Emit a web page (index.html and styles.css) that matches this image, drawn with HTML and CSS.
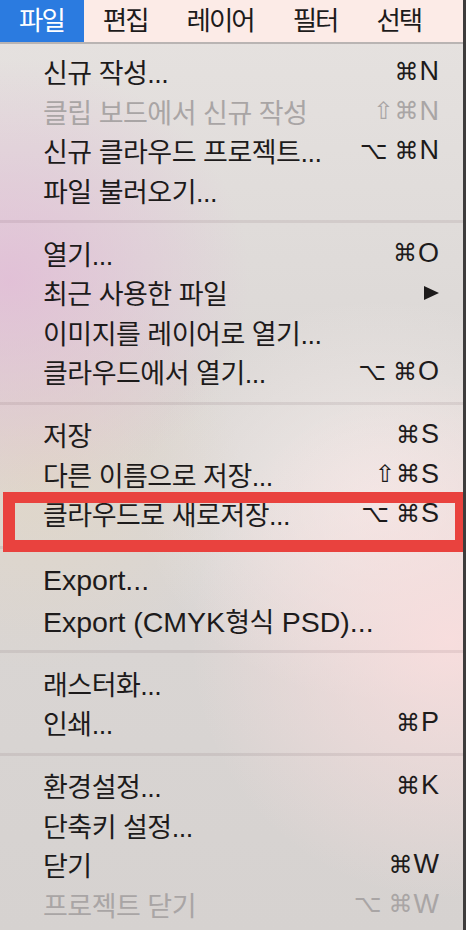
FILE: index.html
```html
<!DOCTYPE html>
<html lang="ko">
<head>
<meta charset="utf-8">
<title>파일 메뉴</title>
<link rel="stylesheet" href="styles.css">
</head>
<body>
<div class="screen">
  <nav class="menubar">
    <span class="bar-item active">파일</span>
    <span class="bar-item">편집</span>
    <span class="bar-item">레이어</span>
    <span class="bar-item">필터</span>
    <span class="bar-item">선택</span>
  </nav>
  <div class="menu">
    <div class="row"><span class="label">신규 작성...</span><span class="keys"><span class="sym">⌘</span>N</span></div>
    <div class="row disabled"><span class="label">클립 보드에서 신규 작성</span><span class="keys"><span class="sym">⇧</span><span class="sym">⌘</span>N</span></div>
    <div class="row"><span class="label">신규 클라우드 프로젝트...</span><span class="keys"><span class="sym opt">⌥</span><span class="sym">⌘</span>N</span></div>
    <div class="row"><span class="label">파일 불러오기...</span></div>
    <div class="sep"></div>
    <div class="row"><span class="label">열기...</span><span class="keys"><span class="sym">⌘</span>O</span></div>
    <div class="row"><span class="label">최근 사용한 파일</span><span class="arrow"></span></div>
    <div class="row"><span class="label">이미지를 레이어로 열기...</span></div>
    <div class="row"><span class="label">클라우드에서 열기...</span><span class="keys"><span class="sym opt">⌥</span><span class="sym">⌘</span>O</span></div>
    <div class="sep"></div>
    <div class="row"><span class="label">저장</span><span class="keys"><span class="sym">⌘</span>S</span></div>
    <div class="row"><span class="label">다른 이름으로 저장...</span><span class="keys"><span class="sym">⇧</span><span class="sym">⌘</span>S</span></div>
    <div class="row marked"><span class="label">클라우드로 새로저장...</span><span class="keys"><span class="sym opt">⌥</span><span class="sym">⌘</span>S</span><span class="highlight-box"></span></div>
    <div class="sep sep-tall"></div>
    <div class="row latin"><span class="label">Export...</span></div>
    <div class="row latin"><span class="label">Export (CMYK<span class="ko">형식</span> PSD)...</span></div>
    <div class="sep"></div>
    <div class="row"><span class="label">래스터화...</span></div>
    <div class="row"><span class="label">인쇄...</span><span class="keys"><span class="sym">⌘</span>P</span></div>
    <div class="sep"></div>
    <div class="row"><span class="label">환경설정...</span><span class="keys"><span class="sym">⌘</span>K</span></div>
    <div class="row"><span class="label">단축키 설정...</span></div>
    <div class="row"><span class="label">닫기</span><span class="keys"><span class="sym">⌘</span>W</span></div>
    <div class="row disabled"><span class="label">프로젝트 닫기</span><span class="keys"><span class="sym opt">⌥</span><span class="sym">⌘</span>W</span></div>
  </div>
</div>
</body>
</html>
```

FILE: styles.css
```css
* { box-sizing: border-box; }
html, body { margin: 0; padding: 0; }
body {
  width: 466px;
  height: 930px;
  overflow: hidden;
  font-family: "Liberation Sans", "Noto Sans CJK KR", sans-serif;
  color: #1d1b1b;
}
.screen {
  width: 466px;
  height: 930px;
  border-right: 3px solid #3e3c3c;
  display: flex;
  flex-direction: column;
  background:
    radial-gradient(ellipse 240px 220px at 10px 280px, rgba(226, 186, 214, 0.8), rgba(226, 186, 214, 0) 100%),
    radial-gradient(ellipse 200px 200px at 40px 470px, rgba(226, 214, 196, 0.7), rgba(226, 214, 196, 0) 100%),
    radial-gradient(ellipse 260px 260px at 450px 640px, rgba(250, 222, 222, 0.9), rgba(250, 222, 222, 0) 100%),
    radial-gradient(ellipse 240px 200px at 380px 500px, rgba(246, 238, 236, 0.8), rgba(246, 238, 236, 0) 100%),
    linear-gradient(to bottom, #e6e2e0 0%, #dcd8d6 40%, #d9d5d3 70%, #d6d2d0 100%);
}
.menubar {
  height: 44px;
  flex: none;
  display: flex;
  background: #fcebe7;
  border-bottom: 2px solid #b9b4b3;
  font-size: 26.5px;
  line-height: 42px;
  letter-spacing: -2px;
}
.bar-item {
  flex: none;
  white-space: nowrap;
  padding: 0 20px 0 19px;
  color: #1d1b1b;
}
.bar-item.active {
  background: #2b7be0;
  color: #ffffff;
}
.menu {
  padding: 8px 0 0 0;
  display: flex;
  flex-direction: column;
}
.row {
  height: 39.5px;
  display: flex;
  align-items: center;
  justify-content: space-between;
  padding: 0 24px 0 43px;
  font-size: 27px;
  white-space: nowrap;
}
.row .label { letter-spacing: -0.5px; }
.row.latin { font-size: 28.5px; }
.row.latin .label { letter-spacing: 0; }
.row.latin .ko { font-size: 27px; letter-spacing: -0.5px; }
.row.disabled { color: #a9a5a5; }
.keys {
  display: flex;
  align-items: center;
  font-family: "Liberation Sans", sans-serif;
  font-size: 27px;
}
.sym {
  font-family: "DejaVu Sans", sans-serif;
  font-size: 24px;
  margin-right: 1px;
}
.sym.opt { margin-right: 7px; }
.arrow {
  width: 0;
  height: 0;
  border-top: 7px solid transparent;
  border-bottom: 7px solid transparent;
  border-left: 15px solid #1d1b1b;
}
.sep {
  height: 23.5px;
  display: flex;
  align-items: center;
}
.sep::before {
  content: "";
  display: block;
  width: 100%;
  height: 3px;
  background: rgba(90, 60, 70, 0.1);
}
.sep-tall { height: 27.5px; }
.marked { position: relative; }
.highlight-box {
  position: absolute;
  left: 3px;
  right: 0;
  top: -2px;
  height: 60px;
  border-style: solid;
  border-color: #e9423e;
  border-width: 11px 8px 12px 12px;
}
```
